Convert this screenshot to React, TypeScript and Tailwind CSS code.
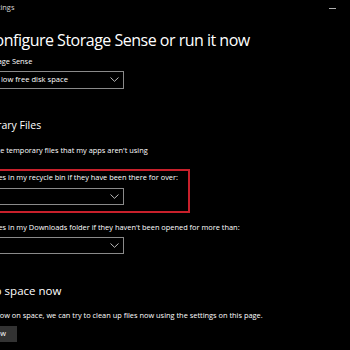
import React from 'react';

const Chevron = () => (
  <svg width="9" height="5" viewBox="0 0 9 5" fill="none" stroke="#d0d0d0" strokeWidth="0.9">
    <path d="M0.5 0.5 L4.5 4.3 L8.5 0.5" />
  </svg>
);

const Dropdown = ({ value, h }: { value: string; h: string }) => (
  <div className={`w-[156px] ${h} border border-[#8a8a8a] flex items-center justify-between pl-[6px] pr-[4px]`}>
    <span className="text-[7.6px] leading-none text-white">{value}</span>
    <Chevron />
  </div>
);

export default function App() {
  return (
    <div
      className="w-[350px] h-[350px] bg-black overflow-hidden relative text-white"
      style={{ fontFamily: '"Open Sans", "Noto Sans", sans-serif' }}
    >
      <div className="absolute right-[14px] top-[8px] w-[7px] h-px bg-[#b0b0b0]" />
      <div className="flex flex-col ml-[-32px]">
        <div className="text-[7.4px] leading-none mt-[4px] ml-[19px] text-[#d8d8d8]">Settings</div>
        <h1 className="text-[16px] leading-none font-normal mt-[21px] ml-[17px] tracking-[-0.5px]">
          Configure Storage Sense or run it now
        </h1>
        <div className="text-[7.4px] leading-none mt-[10px]">Run Storage Sense</div>
        <div className="mt-[5px]">
          <Dropdown value="During low free disk space" h="h-[18px]" />
        </div>
        <h2 className="text-[10.5px] leading-none mt-[31px] ml-[-5px]">Temporary Files</h2>
        <div className="flex items-center gap-[5px] mt-[16px]">
          <div className="w-[9px] h-[9px] border border-white" />
          <div className="text-[7.4px] leading-none">Delete temporary files that my apps aren't using</div>
        </div>
        <div className="mt-[14px] ml-[-6px] w-[228px] border-2 border-[#c8202b] pt-[3px] pb-[6px] pl-[4px]">
          <div className="text-[7.4px] leading-none">Delete files in my recycle bin if they have been there for over:</div>
          <div className="mt-[6px]">
            <Dropdown value="1 day" h="h-[17px]" />
          </div>
        </div>
        <div className="text-[7.4px] leading-none mt-[11px]">
          Delete files in my Downloads folder if they haven't been opened for more than:
        </div>
        <div className="mt-[6px]">
          <Dropdown value="Never" h="h-[17px]" />
        </div>
        <h2 className="text-[11.5px] leading-none mt-[31px] ml-[-7px]">Free up space now</h2>
        <div className="text-[7.4px] leading-none mt-[15px]">
          If you're low on space, we can try to clean up files now using the settings on this page.
        </div>
        <button className="mt-[7px] ml-[-5px] self-start h-[16px] bg-[#333333] pl-[7px] pr-[11px] text-[7.4px] leading-none text-white">
          Clean now
        </button>
      </div>
    </div>
  );
}
